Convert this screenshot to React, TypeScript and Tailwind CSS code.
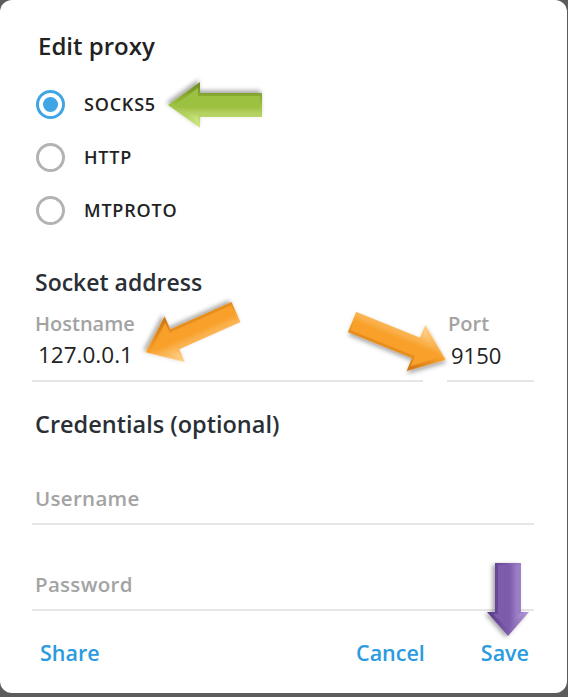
import React from "react";

type ArrowProps = {
  tx: number;
  ty: number;
  angle: number;
  len: number;
  shaft: number;
  head: number;
  headLen: number;
  grad: string;
};

function ArrowShape({ tx, ty, angle, len, shaft, head, headLen, grad }: ArrowProps) {
  const b = len - headLen;
  const pts = `0,${-shaft} ${b},${-shaft} ${b},${-head} ${len},0 ${b},${head} ${b},${shaft} 0,${shaft}`;
  const inner = `2,${-shaft + 3} ${b + 2},${-shaft + 3} ${b + 2},${-head + 6} ${len - 7},0 ${b + 2},${head - 6} ${b + 2},${shaft - 3} 2,${shaft - 3}`;
  return (
    <g transform={`translate(${tx},${ty}) rotate(${angle})`} filter="url(#sh)">
      <polygon points={pts} fill={`url(#${grad}a)`} />
      <polygon points={inner} fill={`url(#${grad}b)`} />
    </g>
  );
}

function Grad({ id, light, mid, dark }: { id: string; light: string; mid: string; dark: string }) {
  return (
    <>
      <linearGradient id={`${id}a`} x1="0" y1="0" x2="0" y2="1">
        <stop offset="0" stopColor={light} />
        <stop offset="0.5" stopColor={mid} />
        <stop offset="1" stopColor={dark} />
      </linearGradient>
      <linearGradient id={`${id}b`} x1="0" y1="0" x2="0" y2="1">
        <stop offset="0" stopColor={light} />
        <stop offset="0.45" stopColor={mid} />
        <stop offset="1" stopColor={mid} />
      </linearGradient>
    </>
  );
}

function Radio({ label, checked }: { label: string; checked?: boolean }) {
  return (
    <div className="flex h-[53px] items-center">
      {checked ? (
        <div className="ml-[4px] flex h-[29px] w-[29px] items-center justify-center rounded-full border-[3px] border-[#3fa5e5]">
          <div className="h-[15px] w-[15px] rounded-full bg-[#3fa5e5]" />
        </div>
      ) : (
        <div className="ml-[4px] h-[29px] w-[29px] rounded-full border-[3px] border-[#b3b3b3]" />
      )}
      <span className="ml-[19px] text-[18px] font-semibold tracking-[0.8px] text-[#222]">{label}</span>
    </div>
  );
}

export default function App() {
  return (
    <div
      className="relative h-[697px] w-[568px] overflow-hidden bg-[#5c5c5c]"
      style={{ fontFamily: '"Open Sans", "Noto Sans", sans-serif' }}
    >
      <div className="flex h-[693px] w-[567px] flex-col rounded-[12px] bg-white pl-[32px] pr-[33px] pt-[32px]">
        <div className="ml-[6px] text-[24px] font-semibold leading-[28px] text-[#222]">Edit proxy</div>
        <div className="mt-[18px] flex flex-col">
          <Radio label="SOCKS5" checked />
          <Radio label="HTTP" />
          <Radio label="MTPROTO" />
        </div>
        <div className="ml-[3px] mt-[31px] text-[23px] font-semibold leading-[28px] text-[#2a2f36]">Socket address</div>
        <div className="mt-[16px] flex gap-[24px]">
          <div className="flex w-[391px] flex-col">
            <div className="pl-[3px] text-[20px] font-semibold leading-[24px] text-[#a3a3a3]">Hostname</div>
            <div className="mt-[5px] pl-[6px] text-[22.5px] leading-[28px] text-[#222]">127.0.0.1</div>
            <div className="mt-[11px] h-[2px] bg-[#e6e6e6]" />
          </div>
          <div className="flex flex-1 flex-col">
            <div className="pl-[1px] text-[20px] font-semibold leading-[24px] text-[#a3a3a3]">Port</div>
            <div className="mt-[5px] pl-[4px] text-[22px] leading-[28px] text-[#222]">9150</div>
            <div className="mt-[11px] h-[2px] bg-[#e6e6e6]" />
          </div>
        </div>
        <div className="ml-[3px] mt-[28px] text-[23.5px] font-semibold leading-[28px] text-[#2a2f36]">Credentials (optional)</div>
        <div className="ml-[3px] mt-[47px] text-[20.5px] font-semibold tracking-[0.3px] leading-[26px] text-[#a3a3a3]">Username</div>
        <div className="mt-[12px] h-[2px] bg-[#e6e6e6]" />
        <div className="ml-[3px] mt-[46px] text-[20.5px] font-semibold tracking-[0.3px] leading-[26px] text-[#a3a3a3]">Password</div>
        <div className="mt-[12px] h-[2px] bg-[#e6e6e6]" />
        <div className="mt-[28px] flex items-center text-[21.5px] font-semibold leading-[28px] text-[#2a9be0]">
          <span className="ml-[8px]">Share</span>
          <span className="ml-auto">Cancel</span>
          <span className="ml-[56px] mr-[5px]">Save</span>
        </div>
      </div>

      <svg className="pointer-events-none absolute left-0 top-0" width="568" height="697">
        <defs>
          <filter id="sh" x="-30%" y="-30%" width="160%" height="160%">
            <feDropShadow dx="1.5" dy="2.5" stdDeviation="2" floodColor="#000" floodOpacity="0.35" />
          </filter>
          <Grad id="g" light="#d4ea8c" mid="#9cc041" dark="#6b8a1f" />
          <Grad id="o" light="#ffd390" mid="#f8a02a" dark="#c96f0c" />
          <Grad id="p" light="#b39ada" mid="#7d5bab" dark="#553882" />
        </defs>
        <ArrowShape tx={262} ty={105} angle={180} len={94} shaft={12} head={23} headLen={32} grad="g" />
        <ArrowShape tx={236} ty={312} angle={156} len={99} shaft={11} head={25} headLen={32} grad="o" />
        <ArrowShape tx={352} ty={322} angle={22} len={101} shaft={11} head={25} headLen={32} grad="o" />
        <ArrowShape tx={508} ty={563} angle={90} len={73} shaft={13} head={21} headLen={24} grad="p" />
      </svg>
    </div>
  );
}
